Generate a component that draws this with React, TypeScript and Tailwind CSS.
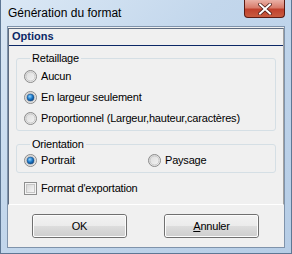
import type { ReactNode } from 'react'

const FONT = 'font-["Liberation_Sans",Arial,sans-serif]'

function Radio({ checked }: { checked?: boolean }) {
  return (
    <svg width="13" height="13" viewBox="0 0 13 13" className="shrink-0">
      <defs>
        <linearGradient id="rb" x1="0" y1="0" x2="1" y2="1">
          <stop offset="0" stopColor="#d9d9d9" />
          <stop offset="1" stopColor="#f7f7f7" />
        </linearGradient>
        <radialGradient id="rd" cx="0.4" cy="0.35" r="0.7">
          <stop offset="0" stopColor="#8fd3ff" />
          <stop offset="0.55" stopColor="#1b78c8" />
          <stop offset="1" stopColor="#0a3f7a" />
        </radialGradient>
      </defs>
      <circle cx="6.5" cy="6.5" r="6" fill="url(#rb)" stroke="#8a8a8a" strokeWidth="1" />
      <circle cx="6.5" cy="6.5" r="4.5" fill="none" stroke="#c9c9c9" strokeWidth="1" />
      {checked && <circle cx="6.5" cy="6.5" r="3.5" fill="url(#rd)" stroke="#1d4f85" strokeWidth="0.6" />}
    </svg>
  )
}

function Option({ label, checked }: { label: string; checked?: boolean }) {
  return (
    <div className="flex items-center h-[13px] gap-[4px]">
      <Radio checked={checked} />
      <span className="leading-[13px]">{label}</span>
    </div>
  )
}

function Group({ title, children, className }: { title: string; children: ReactNode; className?: string }) {
  return (
    <fieldset className={`border border-[#d5dfe5] rounded-[3px] ${className ?? ''}`}>
      <legend className="ml-[6px] px-[2px] leading-[13px]">{title}</legend>
      {children}
    </fieldset>
  )
}

function Button({ children }: { children: ReactNode }) {
  return (
    <button type="button" className="w-[95px] h-[24px] rounded-[3px] border border-[#707070] p-0">
      <div className="h-full rounded-[2px] border border-[#fcfcfc] bg-[linear-gradient(#f2f2f2_0%,#ebebeb_50%,#dddddd_50%,#cfcfcf_100%)] flex items-center justify-center leading-[13px]">
        {children}
      </div>
    </button>
  )
}

export default function App() {
  return (
    <div className={`w-[292px] h-[254px] flex flex-col bg-[linear-gradient(135deg,#dbe8f5_0%,#c3d7ec_40%,#b6cde6_100%)] border-x border-b border-[#5e7794] text-[11px] text-black tracking-[-0.2px] ${FONT}`}>
      {/* title bar */}
      <div className="h-[26px] flex items-start shrink-0">
        <div className="pl-[7px] pt-[6px] text-[12px] leading-[15px] tracking-normal flex-1">Génération du format</div>
        <div className="mr-[6px] w-[41px] h-[18px] rounded-b-[4px] border border-t-0 border-[#5b1a12] bg-[linear-gradient(#eab1a6_0%,#d87c6b_45%,#c0412d_55%,#c85b3f_100%)] flex items-center justify-center">
          <svg width="14" height="12" viewBox="0 0 14 12">
            <path d="M2 1.5 L12 10.5 M12 1.5 L2 10.5" stroke="#4a1a14" strokeWidth="3.6" strokeLinecap="square" />
            <path d="M2 1.5 L12 10.5 M12 1.5 L2 10.5" stroke="#ffffff" strokeWidth="2" strokeLinecap="square" />
          </svg>
        </div>
      </div>

      {/* client area */}
      <div className="mx-[6px] border border-[#7f93ab] bg-[#f0f0f0] h-[222px] flex flex-col">
        <div className="mt-[1px] h-[177px] border border-[#5d6b80] border-r-[#a0a0a0] border-b-white flex flex-col">
          <div className="h-[17px] border-b border-[#0b2866] pl-[3px] pt-[1px] font-bold text-[#0b2866] leading-[13px] tracking-normal">Options</div>
          <div className="px-[7px] pt-[6px] flex flex-col">
            <Group title="Retaillage" className="pl-[7px] pt-[5px] pb-[5px]">
              <div className="flex flex-col gap-[8px]">
                <Option label="Aucun" />
                <Option label="En largeur seulement" checked />
                <Option label="Proportionnel (Largeur,hauteur,caractères)" />
              </div>
            </Group>
            <Group title="Orientation" className="mt-[7px] pl-[7px] pt-[3px] pb-[5px]">
              <div className="flex">
                <div className="w-[124px]"><Option label="Portrait" checked /></div>
                <Option label="Paysage" />
              </div>
            </Group>
            <div className="mt-[9px] ml-[8px] flex items-center gap-[4px] h-[13px]">
              <div className="w-[13px] h-[13px] border border-[#8e8f8f] bg-[#f4f4f4] p-[1px]">
                <div className="w-full h-full border border-[#c6c6c6] bg-[linear-gradient(135deg,#d8d8d8,#f6f6f6)]" />
              </div>
              <span className="leading-[13px]">Format d'exportation</span>
            </div>
          </div>
        </div>
        <div className="mt-[9px] flex pl-[24px] gap-[37px]">
          <Button>OK</Button>
          <Button><span><span className="underline">A</span>nnuler</span></Button>
        </div>
      </div>
    </div>
  )
}
